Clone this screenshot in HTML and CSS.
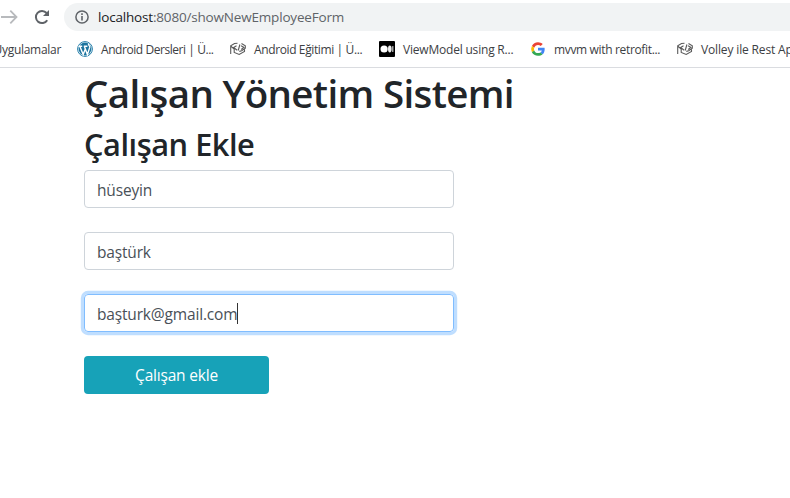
FILE: index.html
```html
<!DOCTYPE html>
<html lang="tr">
<head>
<meta charset="utf-8">
<title>Çalışan Yönetim Sistemi</title>
<link rel="stylesheet" href="styles.css">
</head>
<body>
<svg class="symbols" width="0" height="0">
  <symbol id="cap" viewBox="0 0 16 16">
    <path d="M7.500 2.300L4.500 2.500.7 4.700v8.300M.7 5l3.500 3.200v3.300l5 2 5.300-3V8.500M11.500 2.500l3.800 2.300v2.500l-3.600 2.500-2.400.6M6.500 4.800L3.600 6.500l3.600 2.700M9.900 3.500L8.200 9.500M11 4.700l2.800 1.600-2.600 2.200" fill="none" stroke="#5a5a5a" stroke-width="1.100"/>
  </symbol>
</svg>
<header class="browser">
  <div class="toolbar">
    <svg class="forward" width="18" height="16" viewBox="0 0 18 16"><path d="M0 8h15M9.300 1.700L15.500 8l-6.200 6.300" fill="none" stroke="#b8babd" stroke-width="1.800"/></svg>
    <svg class="reload" width="16" height="16" viewBox="0 0 16 16"><path d="M13.200 11.200A6.100 6.100 0 1 1 12.600 4" fill="none" stroke="#5f6368" stroke-width="2"/><path d="M15 1v6H9z" fill="#5f6368"/></svg>
    <div class="address">
      <svg width="14" height="14" viewBox="0 0 14 14"><circle cx="7" cy="7" r="6.100" fill="none" stroke="#5f6368" stroke-width="1.500"/><path d="M7 6v4.500M7 3.300v1.600" stroke="#5f6368" stroke-width="1.600"/></svg>
      <span class="url"><span class="host">localhost</span>:8080/showNewEmployeeForm</span>
    </div>
  </div>
  <nav class="bookmarks">
    <a class="bookmark apps"><span>Uygulamalar</span></a>
    <a class="bookmark b1">
      <svg width="16" height="16" viewBox="0 0 16 16"><circle cx="8" cy="8" r="7.400" fill="#fff" stroke="#237eaa" stroke-width="1"/><circle cx="8" cy="8" r="6.400" fill="#1d759f"/><path d="M1.600 5.200h3.600M6.800 5.200h3.600M2.900 5.400l3.300 8.200L8.300 8M7.400 5.400l3 8.200 2.400-7.400c.2-1.300-1.800-2-1.200-3.400" fill="none" stroke="#fff" stroke-width="1.400"/></svg>
      <span>Android Dersleri | Ü...</span></a>
    <a class="bookmark b2"><svg width="16" height="16"><use href="#cap"/></svg><span>Android Eğitimi | Ü...</span></a>
    <a class="bookmark b3">
      <svg width="16" height="16" viewBox="0 0 16 16"><rect width="16" height="16" rx="1" fill="#000"/><circle cx="5.100" cy="8" r="3.600" fill="#fff"/><ellipse cx="10.800" cy="8" rx="1.800" ry="3.400" fill="#eee"/><rect x="13.200" y="5" width="1.200" height="6" rx=".6" fill="#ccc"/></svg>
      <span>ViewModel using R...</span></a>
    <a class="bookmark b4">
      <svg width="16" height="16" viewBox="0 0 48 48"><path fill="#ea4335" d="M24 12c3.200 0 6 1.100 8.200 3.200l6-6C34.500 5.700 29.600 3.500 24 3.500c-8 0-15 4.600-18.300 11.300l7 5.400C14.300 15.400 18.800 12 24 12z"/><path fill="#4285f4" d="M44 24.500c0-1.500-.1-2.700-.4-4H24v8h11.400c-.5 2.600-2 4.900-4.300 6.400l6.700 5.200C41.800 36.400 44 31 44 24.500z"/><path fill="#fbbc05" d="M12.700 28.300a12.500 12.500 0 0 1 0-8.100l-7-5.400a20.600 20.600 0 0 0 0 18.900z"/><path fill="#34a853" d="M24 44.500c5.600 0 10.300-1.800 13.800-5l-6.700-5.200c-1.900 1.300-4.200 2-7.100 2-5.200 0-9.700-3.400-11.300-8l-7 5.400C9 40 16 44.500 24 44.500z"/></svg>
      <span>mvvm with retrofit...</span></a>
    <a class="bookmark b5"><svg width="16" height="16"><use href="#cap"/></svg><span>Volley ile Rest Api</span></a>
  </nav>
</header>
<main class="container">
  <h1>Çalışan Yönetim Sistemi</h1>
  <h2>Çalışan Ekle</h2>
  <form class="form">
    <div class="field"><span>hüseyin</span></div>
    <div class="field"><span>baştürk</span></div>
    <div class="field focused"><span>başturk@gmail.com</span><i class="caret"></i></div>
    <button class="submit" type="button">Çalışan ekle</button>
  </form>
</main>
</body>
</html>
```
FILE: styles.css
```css
* { box-sizing: border-box; }
body { margin: 0; height: 498px; overflow: hidden; background: #fff; color: #212529; font-family: "Open Sans", "Noto Sans", sans-serif; }
.symbols { display: block; }
.browser { height: 68px; border-bottom: 1px solid #dadce0; overflow: hidden; }
.toolbar { display: flex; align-items: center; height: 28px; margin-top: 3px; }
.forward { width: 18px; flex: none; margin-left: 1px; }
.reload { flex: none; margin-left: 15px; }
.address { display: flex; align-items: center; flex: 1; height: 28px; margin-left: 14px; padding-left: 11px; background: #f1f3f4; border-radius: 14px 0 0 14px; }
.url { margin-left: 9px; font-size: 13.500px; letter-spacing: -.18px; color: #5f6368; white-space: nowrap; line-height: 28px; }
.host { color: #202124; }
.bookmarks { display: flex; height: 36px; align-items: center; font-size: 12px; color: #3c4043; }
.bookmark { display: flex; flex: none; align-items: center; gap: 8px; white-space: nowrap; }
.bookmark svg { flex: none; }
.apps { width: 77px; padding-right: 16px; justify-content: flex-end; letter-spacing: -.3px; }
.b1 { width: 153px; letter-spacing: -.44px; }
.b2 { width: 149px; letter-spacing: -.38px; }
.b3 { width: 151px; letter-spacing: -.2px; }
.b4 { width: 147px; letter-spacing: -.34px; }
.b5 { letter-spacing: -.15px; }
.container { padding: 1px 0 0 84px; }
h1, h2 { margin: 0; font-weight: 560; white-space: nowrap; }
h1 { font-size: 38.500px; line-height: 48px; margin-bottom: 8px; letter-spacing: -.65px; }
h2 { font-size: 30.800px; line-height: 38px; margin-bottom: 7px; letter-spacing: -.48px; }
.form { width: 370px; }
.field { display: flex; align-items: center; height: 38px; margin-bottom: 24px; padding: 2px 12px 0; border: 1px solid #ced4da; border-radius: 4px; color: #495057; font-size: 15.500px; letter-spacing: -.17px; }
.focused { border-color: #80bdff; box-shadow: 0 0 0 3.200px #bfdeff; }
.caret { width: 1px; height: 21px; background: #333; margin-top: -2px; }
.submit { display: block; width: 185px; height: 38px; padding: 0; border: 0; border-radius: 4px; background: #17a2b8; color: #fff; font: 15.500px "Open Sans", "Noto Sans", sans-serif; letter-spacing: -.2px; }
```
